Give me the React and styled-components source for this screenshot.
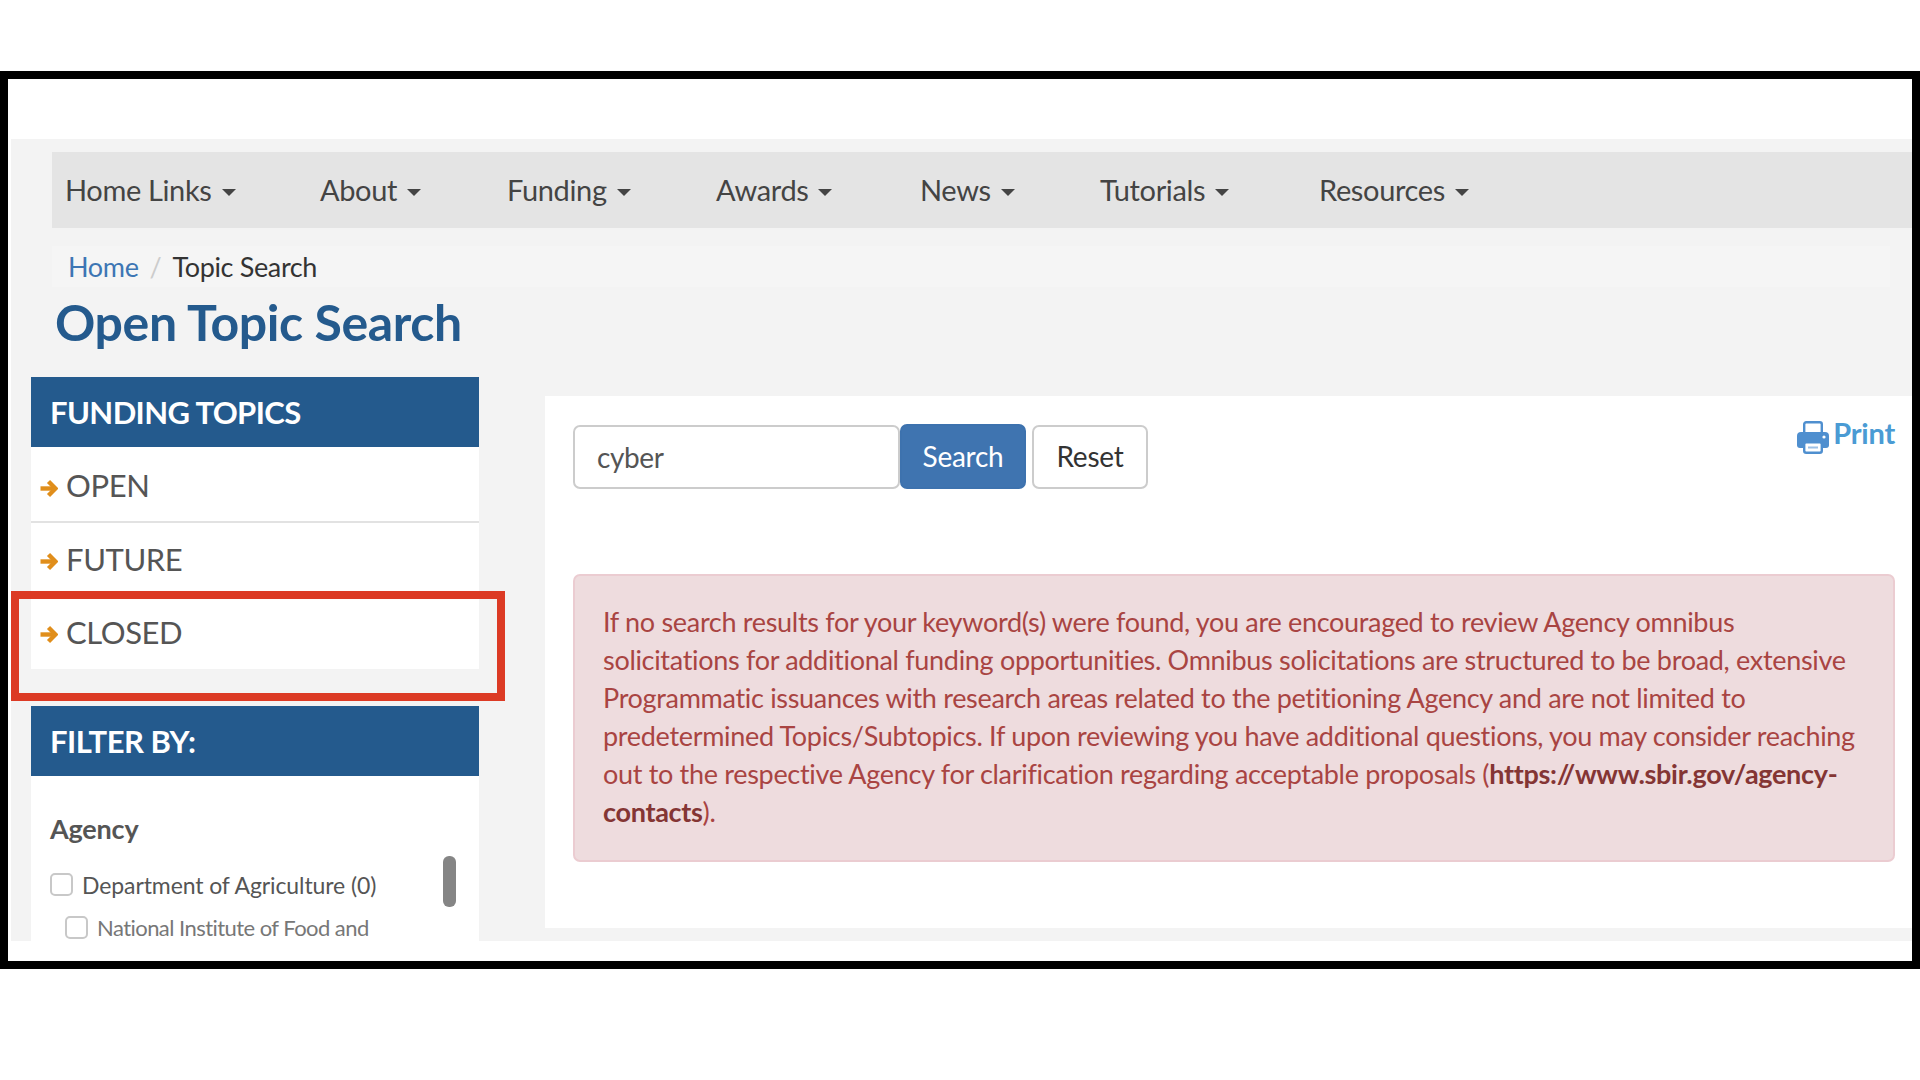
import React from "react";
import styled, {createGlobalStyle} from "styled-components";

const GlobalStyle = createGlobalStyle`
  html, body {
    margin: 0;
    padding: 0;
    background: #fff;
    font-family: "Lato", "Liberation Sans", sans-serif;
  }
`;

const Page = styled.div`
  width: 1920px;
  height: 1080px;
  padding-top: 71px;
  box-sizing: border-box;
  overflow: hidden;
`;

const Frame = styled.div`
  width: 1920px;
  height: 898px;
  box-sizing: border-box;
  border: 8px solid #000;
  padding: 60px 0 20px 3px;
  background: #fff;
`;

const Main = styled.main`
  height: 802px;
  background: #f3f3f3;
  overflow: hidden;
  padding-top: 13px;
  box-sizing: border-box;
`;

const NavBar = styled.nav`
  margin-left: 41px;
  height: 76px;
  background: #e4e4e4;
  position: relative;
`;

const NavItem = styled.a`
  position: absolute;
  left: ${p => p.$left}px;
  top: 20px;
  display: flex;
  align-items: center;
  gap: 10px;
  font-size: 29px;
  line-height: 36px;
  letter-spacing: -0.35px;
  color: #444;
  white-space: nowrap;
`;

const Caret = styled.span`
  width: 0;
  height: 0;
  margin-top: 4px;
  border-left: 7px solid transparent;
  border-right: 7px solid transparent;
  border-top: 7px solid #444;
`;

const Breadcrumb = styled.div`
  margin: 18px 22px 0 41px;
  height: 41px;
  padding-left: 16px;
  background: #f5f5f5;
  display: flex;
  align-items: center;
  font-size: 27px;
  letter-spacing: -0.35px;
  color: #333;
`;

const Crumb = styled.a`
  color: #3d76b4;
`;

const Slash = styled.span`
  color: #ccc;
  margin: 0 11px;
`;

const Title = styled.h1`
  margin: 5px 0 0 44px;
  font-size: 50px;
  line-height: 60px;
  font-weight: 700;
  letter-spacing: -0.4px;
  color: #245a8d;
`;

const Columns = styled.div`
  display: flex;
  margin-top: 25px;
  align-items: flex-start;
`;

const Sidebar = styled.aside`
  margin-left: 20px;
  width: 448px;
  flex: none;
  position: relative;
`;

const Heading = styled.h2`
  margin: 0;
  height: 70px;
  padding-left: 19px;
  display: flex;
  align-items: center;
  background: #245a8d;
  color: #fff;
  font-size: 31px;
  font-weight: 700;
  letter-spacing: -0.6px;
`;

const TopicRow = styled.div`
  height: ${p => (p.$first ? 76 : 73)}px;
  box-sizing: border-box;
  padding: ${p => (p.$first ? 2 : 0)}px 0 ${p => (p.$last ? 2 : 0)}px 9px;
  display: flex;
  align-items: center;
  gap: 8px;
  background: #fff;
  border-bottom: ${p => (p.$last ? "none" : "2px solid #e2e2e2")};
  font-size: 31px;
  letter-spacing: -0.4px;
  color: #555;
`;

const ArrowIcon = styled.svg`
  width: 18px;
  height: 19px;
  flex: none;
  margin-top: 6px;
  fill: none;
  stroke: #e08e1b;
  stroke-width: 4.4;
`;

const Highlight = styled.div`
  position: absolute;
  left: -20px;
  top: 214px;
  width: 494px;
  height: 110px;
  box-sizing: border-box;
  border: 8px solid #dc3a24;
  pointer-events: none;
`;

const FilterHeading = styled(Heading)`
  margin-top: 37px;
  letter-spacing: -0.5px;
`;

const FilterBody = styled.div`
  background: #fff;
  height: 300px;
  padding: 35px 0 0 19px;
  position: relative;
`;

const FilterLabel = styled.div`
  font-size: 27px;
  line-height: 36px;
  font-weight: 700;
  letter-spacing: -0.2px;
  color: #555;
  margin-bottom: 16px;
`;

const CheckRow = styled.label`
  display: flex;
  align-items: center;
  gap: 9px;
  height: 43px;
  padding-left: ${p => (p.$sub ? 15 : 0)}px;
  font-size: ${p => (p.$sub ? 22 : 23)}px;
  letter-spacing: ${p => (p.$sub ? -0.55 : -0.1)}px;
  color: ${p => (p.$sub ? "#777" : "#555")};
  white-space: nowrap;
`;

const CheckBox = styled.span`
  width: 23px;
  height: 23px;
  box-sizing: border-box;
  flex: none;
  background: #fff;
  border: 2px solid #c8c8c8;
  border-radius: 5px;
`;

const ScrollThumb = styled.div`
  position: absolute;
  left: 412px;
  top: 80px;
  width: 13px;
  height: 51px;
  border-radius: 6px;
  background: #858585;
`;

const Panel = styled.section`
  margin: 19px 0 0 66px;
  flex: 1;
  height: 532px;
  box-sizing: border-box;
  background: #fff;
  padding: 28px 17px 0 28px;
  position: relative;
`;

const SearchRow = styled.form`
  display: flex;
  align-items: center;
  height: 65px;
`;

const SearchInput = styled.input`
  width: 327px;
  height: 64px;
  box-sizing: border-box;
  padding: 0 22px;
  border: 2px solid #ccc;
  border-radius: 7px;
  font-family: inherit;
  font-size: 28px;
  letter-spacing: -0.4px;
  color: #555;
  outline: none;
  background: #fff;
`;

const Button = styled.button`
  height: ${p => (p.$primary ? 65 : 64)}px;
  width: ${p => (p.$primary ? 126 : 116)}px;
  margin-left: ${p => (p.$primary ? 0 : 6)}px;
  box-sizing: border-box;
  border: 2px solid ${p => (p.$primary ? "#3d72ae" : "#ccc")};
  border-radius: 7px;
  background: ${p => (p.$primary ? "#3f74b0" : "#fff")};
  color: ${p => (p.$primary ? "#fff" : "#333")};
  font-family: inherit;
  font-size: 28px;
  letter-spacing: -0.25px;
  padding: 0 0 2px;
`;

const PrintLink = styled.a`
  position: absolute;
  right: 17px;
  top: 19px;
  display: flex;
  align-items: flex-start;
  gap: 4px;
  color: #4a9bd4;
  font-size: 29px;
  line-height: 35px;
  font-weight: 700;
  letter-spacing: -0.2px;
`;

const PrinterIcon = styled.svg`
  width: 32px;
  height: 33px;
  margin-top: 6px;
  flex: none;
`;

const Alert = styled.div`
  margin-top: 85px;
  height: 288px;
  box-sizing: border-box;
  padding: 27px 28px 0 28px;
  background: #eedcde;
  border: 2px solid #ebccd1;
  border-radius: 7px;
  color: #a94442;
  font-size: 27px;
  line-height: 38px;
  letter-spacing: -0.31px;
`;

const AlertLink = styled.a`
  color: #843534;
  font-weight: 700;
`;

const navItems = [
    {label: "Home Links", left: 13},
    {label: "About", left: 268},
    {label: "Funding", left: 455},
    {label: "Awards", left: 664},
    {label: "News", left: 868},
    {label: "Tutorials", left: 1048},
    {label: "Resources", left: 1267},
];

const Arrow = () => (
    <ArrowIcon viewBox="0 0 18 19">
        <path d="M0.5 9.5H15"/>
        <path d="M8.5 2.5L15.5 9.5L8.5 16.5"/>
    </ArrowIcon>
);

const Printer = () => (
    <PrinterIcon viewBox="0 0 32 33">
        <rect x="7.2" y="1.2" width="17.6" height="13" rx="2" fill="#fff" stroke="#4f8fcf" strokeWidth="2.4"/>
        <path d="M4 11h24a4 4 0 0 1 4 4v9a3 3 0 0 1-3 3H3a3 3 0 0 1-3-3v-9a4 4 0 0 1 4-4z" fill="#4f8fcf"/>
        <circle cx="27" cy="16" r="1.6" fill="#fff"/>
        <rect x="7.2" y="21.2" width="17.6" height="10.6" rx="2" fill="#fff" stroke="#4f8fcf" strokeWidth="2.4"/>
        <rect x="11" y="25.5" width="10" height="2" fill="#9cc0e6"/>
    </PrinterIcon>
);

const App = () => {
    return (
        <Page>
            <GlobalStyle/>
            <Frame>
                <Main>
                    <NavBar>
                        {navItems.map(item => (
                            <NavItem key={item.label} $left={item.left}>{item.label}<Caret/></NavItem>
                        ))}
                    </NavBar>
                    <Breadcrumb>
                        <Crumb>Home</Crumb>
                        <Slash>/</Slash>
                        Topic Search
                    </Breadcrumb>
                    <Title>Open Topic Search</Title>
                    <Columns>
                        <Sidebar>
                            <Heading>FUNDING TOPICS</Heading>
                            <TopicRow $first><Arrow/>OPEN</TopicRow>
                            <TopicRow><Arrow/>FUTURE</TopicRow>
                            <TopicRow $last><Arrow/>CLOSED</TopicRow>
                            <Highlight/>
                            <FilterHeading>FILTER BY:</FilterHeading>
                            <FilterBody>
                                <FilterLabel>Agency</FilterLabel>
                                <CheckRow><CheckBox/>Department of Agriculture (0)</CheckRow>
                                <CheckRow $sub><CheckBox/>National Institute of Food and</CheckRow>
                                <ScrollThumb/>
                            </FilterBody>
                        </Sidebar>
                        <Panel>
                            <SearchRow>
                                <SearchInput value="cyber" readOnly/>
                                <Button type="button" $primary>Search</Button>
                                <Button type="button">Reset</Button>
                            </SearchRow>
                            <PrintLink><Printer/>Print</PrintLink>
                            <Alert>
                                If no search results for your keyword(s) were found, you are encouraged to review Agency omnibus solicitations for additional funding opportunities. Omnibus solicitations are structured to be broad, extensive Programmatic issuances with research areas related to the petitioning Agency and are not limited to predetermined Topics/Subtopics. If upon reviewing you have additional questions, you may consider reaching out to the respective Agency for clarification regarding acceptable proposals (<AlertLink>https://www.sbir.gov/agency-contacts</AlertLink>).
                            </Alert>
                        </Panel>
                    </Columns>
                </Main>
            </Frame>
        </Page>
    );
};

export default App;
